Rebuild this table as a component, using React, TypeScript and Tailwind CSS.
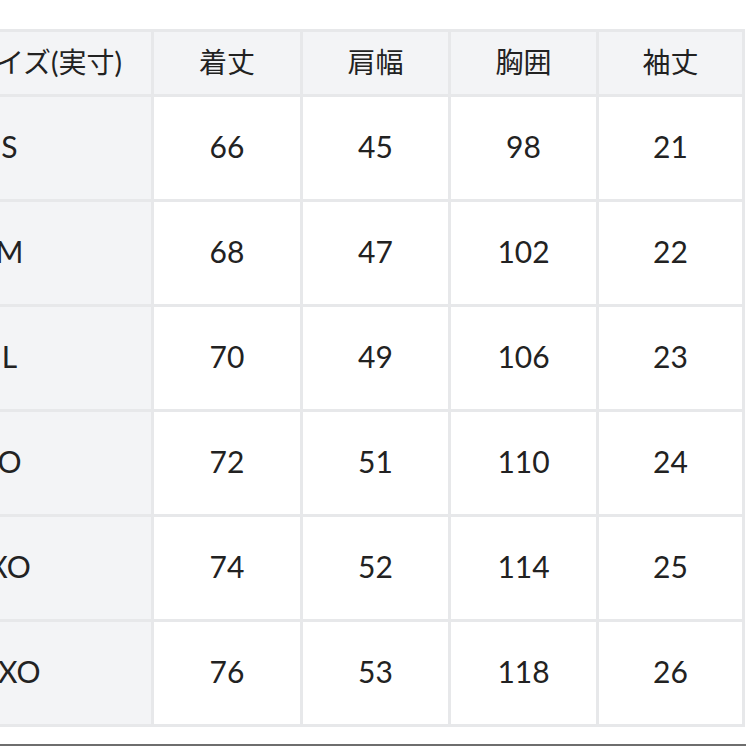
const headers = ["着丈", "肩幅", "胸囲", "袖丈"];

const rows: { size: string; values: number[] }[] = [
  { size: "S", values: [66, 45, 98, 21] },
  { size: "M", values: [68, 47, 102, 22] },
  { size: "L", values: [70, 49, 106, 23] },
  { size: "O", values: [72, 51, 110, 24] },
  { size: "XO", values: [74, 52, 114, 25] },
  { size: "XXO", values: [76, 53, 118, 26] },
];

export default function App() {
  return (
    <div
      className="relative w-[746px] h-[746px] overflow-hidden bg-white text-[#222]"
      style={{ fontFamily: "Lato, 'Noto Sans CJK JP', sans-serif" }}
    >
      <div className="pt-[29px] ml-[-135px]">
        {/* Size table */}
        <div className="w-[880px] grid grid-cols-[283px_146px_145px_145px_143px] grid-rows-[62px_repeat(6,102px)] gap-[3px] p-[3px] bg-[#e7e8ea]">
          <div className="bg-[#f3f4f6] flex items-center justify-end pr-[29px] pb-[3px] text-[28px] leading-none">
            サイズ(実寸)
          </div>
          {headers.map((h) => (
            <div
              key={h}
              className="bg-[#f3f4f6] flex items-center justify-center pb-[3px] text-[28px] leading-none"
            >
              {h}
            </div>
          ))}
          {rows.map((r) => (
            <>
              <div
                key={r.size}
                className="bg-[#f3f4f6] flex items-center justify-center pb-[4px] text-[30px] leading-none"
              >
                {r.size}
              </div>
              {r.values.map((v, i) => (
                <div
                  key={r.size + i}
                  className="bg-white flex items-center justify-center pb-[4px] text-[30px] leading-none"
                >
                  {v}
                </div>
              ))}
            </>
          ))}
        </div>
      </div>
      <div className="absolute left-0 right-0 bottom-0 h-[2px] bg-[#6e6e6e]" />
    </div>
  );
}
